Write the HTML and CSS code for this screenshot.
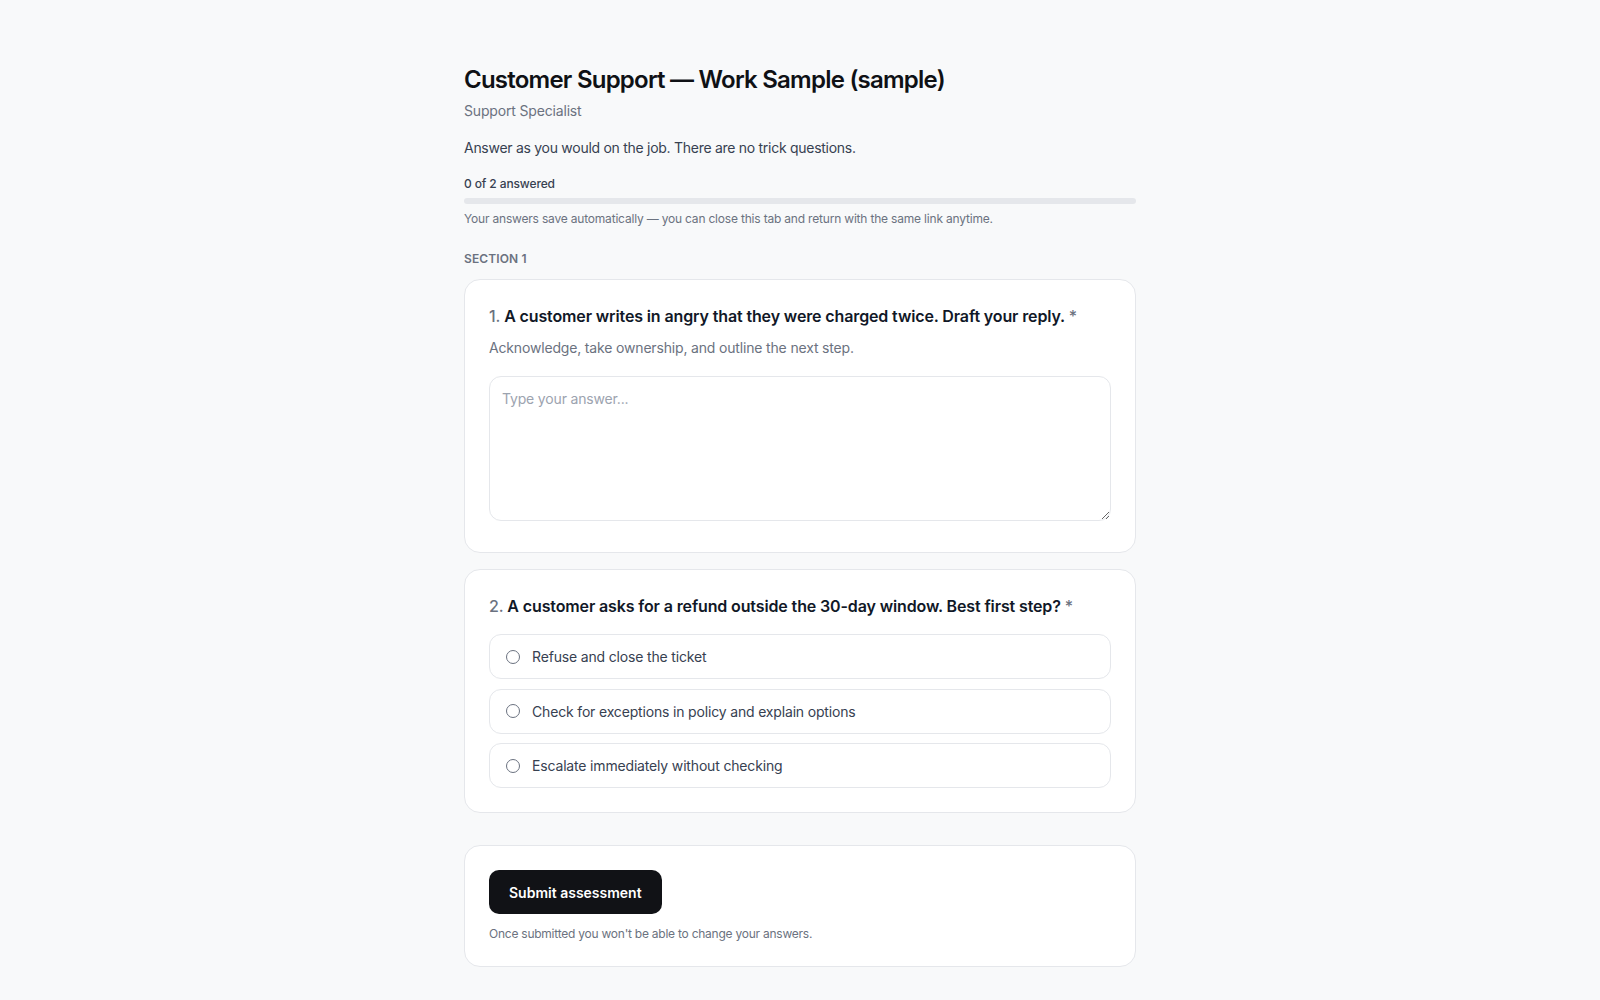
FILE: index.html
```html
<!DOCTYPE html>
<html lang="en">
<head>
<meta charset="utf-8">
<title>Customer Support — Work Sample (sample)</title>
<link rel="stylesheet" href="styles.css">
</head>
<body>
<main class="page">
  <header class="header">
    <h1 class="title">Customer Support — Work Sample (sample)</h1>
    <p class="role">Support Specialist</p>
    <p class="intro">Answer as you would on the job. There are no trick questions.</p>
    <div class="progress">
      <div class="progress-label">0 of 2 answered</div>
      <div class="progress-track"><div class="progress-fill" style="width:0%"></div></div>
      <p class="autosave">Your answers save automatically — you can close this tab and return with the same link anytime.</p>
    </div>
  </header>

  <section class="section">
    <h2 class="section-title">SECTION 1</h2>
    <div class="questions">
      <div class="card">
        <div class="question"><span class="qnum">1.</span> A customer writes in angry that they were charged twice. Draft your reply. <span class="req">*</span></div>
        <p class="hint">Acknowledge, take ownership, and outline the next step.</p>
        <textarea class="answer" placeholder="Type your answer..."></textarea>
      </div>
      <div class="card">
        <div class="question"><span class="qnum">2.</span> A customer asks for a refund outside the 30-day window. Best first step? <span class="req">*</span></div>
        <div class="options">
          <label class="option"><span class="radio"></span><span>Refuse and close the ticket</span></label>
          <label class="option"><span class="radio"></span><span>Check for exceptions in policy and explain options</span></label>
          <label class="option"><span class="radio"></span><span>Escalate immediately without checking</span></label>
        </div>
      </div>
    </div>
  </section>

  <div class="card submit-card">
    <button class="submit" type="button">Submit assessment</button>
    <p class="submit-note">Once submitted you won't be able to change your answers.</p>
  </div>
</main>
</body>
</html>
```

FILE: styles.css
```css
* { box-sizing: border-box; }
html, body { margin: 0; padding: 0; }
body {
  background: #f8f9fa;
  font-family: Inter, "Liberation Sans", sans-serif;
  color: #111827;
  -webkit-font-smoothing: antialiased;
}
.page {
  max-width: 672px;
  margin: 0 auto;
  padding: 64px 0 40px;
}
.title {
  margin: 0;
  font-size: 24px;
  line-height: 32px;
  font-weight: 600;
  letter-spacing: -0.032em;
  color: #0f1115;
}
.role {
  margin: 5px 0 0;
  font-size: 14px;
  line-height: 20px;
  letter-spacing: -0.012em;
  color: #6b7280;
}
.intro {
  margin: 15px 0 0;
  font-size: 14px;
  line-height: 24px;
  letter-spacing: -0.02em;
  color: #374151;
}
.progress { margin-top: 16px; }
.progress-label {
  font-size: 12px;
  line-height: 16px;
  font-weight: 500;
  letter-spacing: -0.01em;
  color: #374151;
}
.progress-track {
  margin-top: 6px;
  height: 6px;
  border-radius: 9999px;
  background: #e5e7eb;
  overflow: hidden;
}
.progress-fill { height: 100%; background: #111827; }
.autosave {
  margin: 7px 0 0;
  font-size: 12px;
  line-height: 16px;
  letter-spacing: -0.016em;
  color: #6b7280;
}
.section { margin-top: 24px; }
.section-title {
  margin: 0 0 12px;
  font-size: 12px;
  line-height: 16px;
  font-weight: 600;
  letter-spacing: 0.01em;
  color: #6b7280;
}
.questions {
  display: flex;
  flex-direction: column;
  gap: 16px;
}
.card {
  background: #fff;
  border: 1px solid #e5e7eb;
  border-radius: 16px;
  padding: 24px;
}
.question {
  font-size: 16px;
  line-height: 24px;
  font-weight: 600;
  letter-spacing: -0.008em;
  color: #111827;
}
.qnum { color: #6b7280; font-weight: 500; }
.req { color: #6b7280; font-weight: 500; }
.hint {
  margin: 10px 0 0;
  font-size: 14px;
  line-height: 20px;
  letter-spacing: -0.012em;
  color: #6b7280;
}
.answer {
  display: block;
  width: 100%;
  height: 145px;
  margin: 18px 0 7px;
  padding: 12px;
  border: 1px solid #e5e7eb;
  border-radius: 12px;
  font-family: inherit;
  font-size: 14px;
  line-height: 20px;
  letter-spacing: -0.012em;
  color: #111827;
  background: #fff;
  resize: vertical;
  outline: none;
}
.answer::placeholder { color: #9ca3af; }
.options {
  margin-top: 16px;
  display: flex;
  flex-direction: column;
  gap: 9.5px;
}
.option {
  display: flex;
  align-items: center;
  gap: 12px;
  padding: 12px 16px;
  border: 1px solid #e5e7eb;
  border-radius: 12px;
  font-size: 14px;
  line-height: 19px;
  letter-spacing: -0.012em;
  color: #374151;
  cursor: pointer;
}
.radio {
  flex: none;
  width: 14px;
  height: 14px;
  border: 1.5px solid #6b7280;
  border-radius: 50%;
  background: #fff;
}
.submit-card { margin-top: 32px; }
.submit {
  display: block;
  height: 44px;
  padding: 0 20px;
  border: 0;
  border-radius: 10px;
  background: #111216;
  color: #fff;
  font-family: inherit;
  font-size: 14px;
  font-weight: 600;
  cursor: pointer;
}
.submit-note {
  margin: 12px 0 0;
  font-size: 12px;
  line-height: 16px;
  letter-spacing: -0.02em;
  color: #6b7280;
}
```
